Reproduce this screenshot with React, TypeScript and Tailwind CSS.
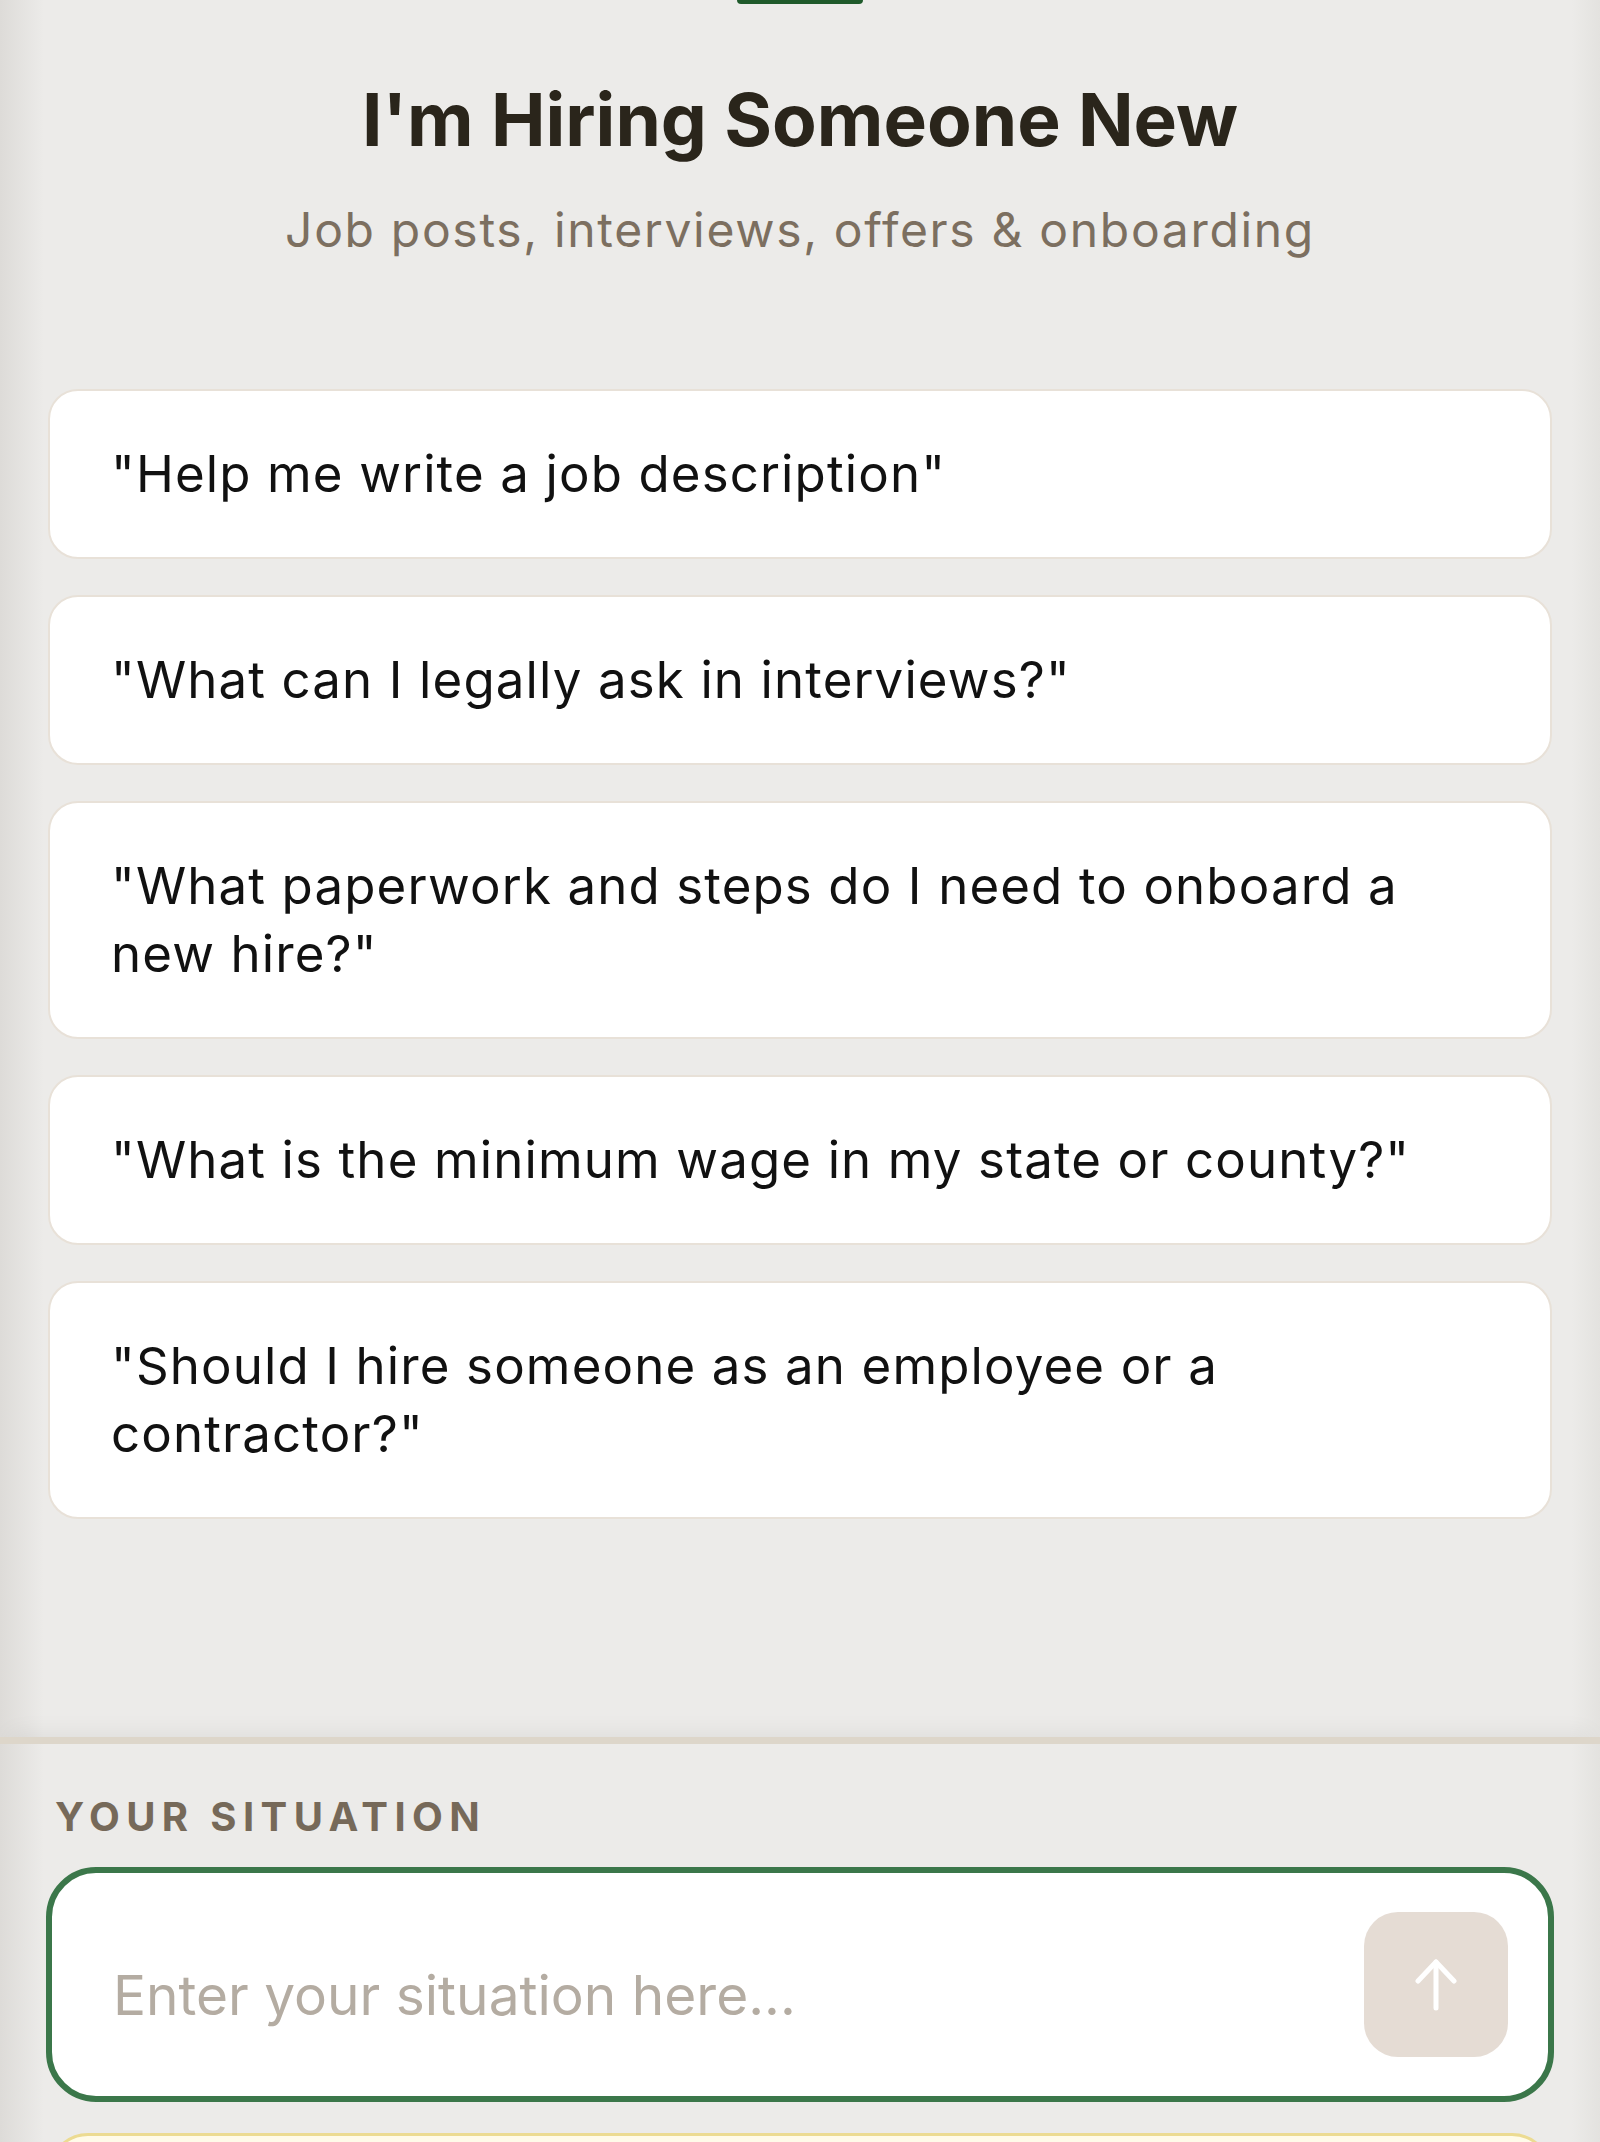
import { useState } from "react";

const PROMPTS = [
  "\"Help me write a job description\"",
  "\"What can I legally ask in interviews?\"",
  "\"What paperwork and steps do I need to onboard a new hire?\"",
  "\"What is the minimum wage in my state or county?\"",
  "\"Should I hire someone as an employee or a contractor?\"",
];

function ArrowUp() {
  return (
    <svg width="48" height="52" viewBox="0 0 48 52" fill="none" stroke="white" strokeWidth="5" strokeLinecap="round" strokeLinejoin="round">
      <path d="M24 3v46" />
      <path d="M6 22 24 3l18 19" />
    </svg>
  );
}

export default function App() {
  const [situation, setSituation] = useState("");

  return (
    <div className="flex h-[2142px] flex-col overflow-hidden bg-[linear-gradient(90deg,#dddbd8_0px,#ecebe9_44px,#ecebe9_1572px,#e3e2df_1600px)] font-['Inter','Noto_Sans',sans-serif]">
      <main className="flex h-[1737px] shrink-0 flex-col">
        <div className="mx-auto h-1 w-[126px] rounded-b-full bg-[#1f5a2b]" />

        <header className="mt-[72px] flex flex-col items-center gap-[37px] text-center">
          <h1 className="text-[73px] leading-[88px] font-bold text-[#2a251b]">I'm Hiring Someone New</h1>
          <p className="text-[48px] leading-[58px] tracking-[0.035em] text-[#7c6f60]">Job posts, interviews, offers &amp; onboarding</p>
        </header>

        <ul className="mt-[130px] flex flex-col gap-[36px] px-[48px]">
          {PROMPTS.map((p) => (
            <li key={p}>
              <button
                type="button"
                className="w-full rounded-[30px] border-2 border-[#e8e1d8] bg-white px-[61px] py-[49px] text-left text-[51px] leading-[68px] tracking-[0.022em] text-[#111111]"
              >
                {p}
              </button>
            </li>
          ))}
        </ul>
      </main>

      <section className="shrink-0 border-t-[7px] border-[#ddd6ca] px-[46px] pt-[49px] shadow-[0_-14px_22px_-10px_rgba(0,0,0,0.06)]">
        <label htmlFor="situation" className="block pl-[9px] text-[40px] leading-[48px] font-bold tracking-[0.16em] text-[#766959]">
          YOUR SITUATION
        </label>
        <div className="mt-[26px] flex h-[235px] items-center rounded-[50px] border-[6px] border-[#3b774a] bg-white pr-[40px] pl-[61px]">
          <input
            id="situation"
            value={situation}
            onChange={(e) => setSituation(e.target.value)}
            placeholder="Enter your situation here..."
            className="mt-[20px] h-[66px] flex-1 bg-transparent text-[55px] leading-[66px] text-[#111111] outline-none placeholder:text-[#b4aca2]"
          />
          <button type="button" className="flex h-[145px] w-[144px] items-center justify-center rounded-[34px] bg-[#e5dcd4]">
            <ArrowUp />
          </button>
        </div>
        <div className="mx-[2px] mt-[31px] h-[120px] rounded-[40px] border-[3px] border-[#ecdb92] bg-[#fffbe9]" />
      </section>
    </div>
  );
}
